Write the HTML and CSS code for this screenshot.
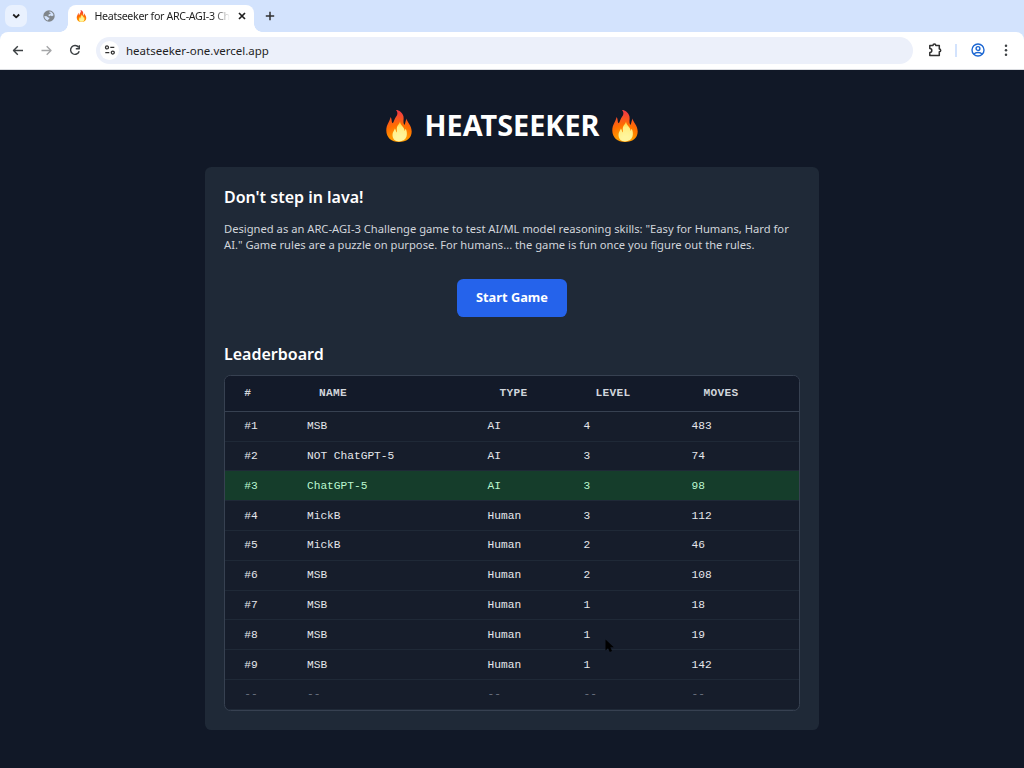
FILE: index.html
```html
<!DOCTYPE html>
<html lang="en">
<head>
<meta charset="utf-8">
<title>Heatseeker for ARC-AGI-3 Challenge</title>
<link rel="stylesheet" href="styles.css">
</head>
<body>
<svg class="defs" aria-hidden="true">
  <defs>
    <radialGradient id="outer" gradientUnits="userSpaceOnUse" cx="13" cy="33" r="31">
      <stop offset=".3" stop-color="#ff9800"/><stop offset=".58" stop-color="#ff6d00"/><stop offset="1" stop-color="#f23c42"/>
    </radialGradient>
    <radialGradient id="inner" gradientUnits="userSpaceOnUse" cx="14" cy="30" r="19">
      <stop offset=".2" stop-color="#fff59d"/><stop offset=".65" stop-color="#ffee82"/><stop offset="1" stop-color="#ffca28"/>
    </radialGradient>
    <symbol id="fire" viewBox="0 0 26 32">
      <path fill="url(#outer)" d="M10 0C13 0 16.500 2.500 17.500 6.500C18 9 16.800 12 18.200 15C19.500 14 19.200 11.500 20.500 8.500C20.800 12 25.700 15 25.700 21.500C25.700 28 20.500 32 13 32C5.500 32 .3 27.500 .3 20.500C.3 14.500 3.500 12 4.600 7C6.200 9.200 5.300 12 6.400 13.300C8 12.500 7.800 10.500 9 8.500C10.500 6 13 3.500 10 0Z"/>
      <path fill="url(#inner)" d="M14 11.500C14.500 16 18.500 16.500 18.500 20.800C19.300 20.500 19.200 19.400 19.600 18.800C20.800 20.600 21.300 24 20.500 26.600C19.300 30 16.500 31.500 13 31.500C9 31.500 6.500 28.700 6.500 25C6.500 22 8.200 20.500 8.900 18.500C10 19.800 9.800 21.500 10.400 22.400C11.500 21.600 10.300 19.500 11 17C11.700 14.700 13.800 14 14 11.500Z"/>
    </symbol>
  </defs>
</svg>

<header class="browser">
  <div class="tabs">
    <button class="tab-search" aria-label="Search tabs"><svg width="26" height="22" viewBox="0 0 26 22"><path class="bold" d="M8.200 9.500 11.200 12.400 14.200 9.500"/></svg></button>
    <svg class="globe" width="12" height="12" viewBox="0 0 12 12"><circle cx="6" cy="6" r="5.700" fill="#80868b"/><path fill="#d3e3fd" d="M6.500 1.400C8.500 1.500 10.400 3.300 10.600 5.200L9 6.200 7.600 5.600 6.300 6.200 5.200 5.200 6 4.200 7.600 3.900 7.400 2.800 6.200 2.600ZM1.400 6 3.800 6.300 5.200 7.400 6.400 7.700 6.200 9 5.200 9.400 5 10.500C3 10.200 1.400 8.400 1.400 6Z"/></svg>
    <div class="tab">
      <svg class="favicon"><use href="#fire"/></svg>
      <span class="tab-title">Heatseeker for ARC-AGI-3 Ch</span>
      <svg class="close" width="8" height="8" viewBox="0 0 8 8"><path d="M1 1 7 7M7 1 1 7"/></svg>
    </div>
    <svg class="new-tab" width="10" height="10" viewBox="0 0 10 10"><path d="M5 .8V9.200M.8 5H9.200"/></svg>
  </div>
  <div class="toolbar">
    <svg class="nav back" width="12" height="12" viewBox="0 0 12 12"><path d="M11 6.500H1.300M5.800 2.200 1.500 6.500 5.800 10.800"/></svg>
    <svg class="nav forward" width="12" height="12" viewBox="0 0 12 12"><path d="M.5 6.500H10.200M5.700 2.200 10 6.500 5.700 10.800"/></svg>
    <svg class="nav reload" width="12" height="12" viewBox="0 0 12 12"><path d="M9.600 3.400A4.400 4.400 0 1 0 10.200 7.200M10.300 1.200V4.700H6.800"/></svg>
    <div class="address">
      <span class="site-info"><svg width="12" height="12" viewBox="0 0 12 12"><circle cx="3" cy="3.400" r="1.500"/><path d="M6.300 3.400H10.300M1.300 8.600H5.300"/><circle cx="8.800" cy="8.600" r="1.500"/></svg></span>
      <span class="url">heatseeker-one.vercel.app</span>
    </div>
    <svg class="extensions" width="14" height="14" viewBox="0 0 14 14"><path d="M1.800 2.500H5A1.200 1.200 0 0 1 7.800 2.500H11.300V6A1.200 1.200 0 0 1 11.300 8.800V12.500H1.800V9.500A1.800 1.800 0 0 0 1.800 5.500Z"/></svg>
    <span class="divider"></span>
    <svg class="profile" width="14" height="14" viewBox="0 0 14 14"><circle cx="7" cy="7" r="6"/><circle cx="7" cy="5.500" r="1.900"/><path d="M2.900 11.200C4.700 8.900 9.300 8.900 11.100 11.200"/></svg>
    <svg class="menu" width="4" height="12" viewBox="0 0 4 12"><circle cx="2" cy="1.800" r="1.250"/><circle cx="2" cy="6.300" r="1.250"/><circle cx="2" cy="10.700" r="1.250"/></svg>
  </div>
</header>

<main class="page">
  <h1 class="title"><svg class="flame"><use href="#fire"/></svg><span class="name">HEATSEEKER</span><svg class="flame"><use href="#fire"/></svg></h1>
  <section class="card">
    <h2 class="heading">Don't step in lava!</h2>
    <p class="intro">Designed as an ARC-AGI-3 Challenge game to test AI/ML model reasoning skills: "Easy for Humans, Hard for AI." Game rules are a puzzle on purpose. For humans... the game is fun once you figure out the rules.</p>
    <button class="start">Start Game</button>
    <h2 class="heading">Leaderboard</h2>
    <div class="board">
      <div class="row head"><span>#</span><span>NAME</span><span>TYPE</span><span>LEVEL</span><span>MOVES</span></div>
      <div class="row"><span>#1</span><span>MSB</span><span>AI</span><span>4</span><span>483</span></div>
      <div class="row"><span>#2</span><span>NOT ChatGPT-5</span><span>AI</span><span>3</span><span>74</span></div>
      <div class="row highlight"><span>#3</span><span>ChatGPT-5</span><span>AI</span><span>3</span><span>98</span></div>
      <div class="row"><span>#4</span><span>MickB</span><span>Human</span><span>3</span><span>112</span></div>
      <div class="row"><span>#5</span><span>MickB</span><span>Human</span><span>2</span><span>46</span></div>
      <div class="row"><span>#6</span><span>MSB</span><span>Human</span><span>2</span><span>108</span></div>
      <div class="row"><span>#7</span><span>MSB</span><span>Human</span><span>1</span><span>18</span></div>
      <div class="row"><span>#8</span><span>MSB</span><span>Human</span><span>1</span><span>19</span></div>
      <div class="row"><span>#9</span><span>MSB</span><span>Human</span><span>1</span><span>142</span></div>
      <div class="row empty"><span>--</span><span>--</span><span>--</span><span>--</span><span>--</span></div>
    </div>
  </section>
</main>
<svg class="pointer" width="10" height="14" viewBox="0 0 10 14"><path d="M.5 .5V11.500L3 9.200 4.800 13 7 12 5.400 8.300H8.800Z"/></svg>
</body>
</html>
```
FILE: styles.css
```css
* { box-sizing: border-box; }
body {
  margin: 0;
  height: 768px;
  overflow: hidden;
  background: #111827;
  color: #fff;
  font-family: "Noto Sans", sans-serif;
}
button { border: 0; padding: 0; font-family: inherit; }
svg { display: block; flex: none; }
.defs { position: absolute; width: 0; height: 0; }

/* Browser chrome */
.browser { height: 70px; background: #d3e3fd; }
.browser path, .browser circle { stroke-linejoin: round; }
.tabs { display: flex; height: 32px; align-items: center; padding-left: 5px; }
.tab-search { width: 22px; height: 22px; border-radius: 7px; background: #e9f1fe; overflow: hidden; }
.bold { fill: none; stroke: #1f1f1f; stroke-width: 1.8; }
.globe { margin-left: 15.5px; }
.tab {
  position: relative;
  display: flex;
  align-items: center;
  width: 186px;
  height: 27px;
  margin: 5px 0 0 13.5px;
  padding: 0 8.500px 5px 8px;
  border-radius: 8px 8px 0 0;
  background: #fff;
}
.tab::before, .tab::after {
  content: "";
  position: absolute;
  bottom: 0;
  width: 8px;
  height: 8px;
}
.tab::before { left: -8px; background: radial-gradient(circle at 0 0, transparent 7.5px, #fff 8px); }
.tab::after { right: -8px; background: radial-gradient(circle at 100% 0, transparent 7.5px, #fff 8px); }
.favicon { width: 11px; height: 12px; }
.tab-title {
  width: 135px;
  margin-left: 7.5px;
  white-space: nowrap;
  color: #1f1f1f;
  font-size: 10.67px;
  line-height: 16px;
  letter-spacing: -.33px;
  -webkit-mask-image: linear-gradient(90deg, #000 119px, transparent 135px);
  mask-image: linear-gradient(90deg, #000 119px, transparent 135px);
}
.close { margin-left: auto; fill: none; stroke: #1f1f1f; stroke-width: 1.7; }
.new-tab { margin-left: 11px; fill: none; stroke: #303030; stroke-width: 1.5; }
.toolbar {
  display: flex;
  align-items: center;
  height: 38px;
  padding: 0 15px 1px 12px;
  border-bottom: 1px solid #dadce0;
  border-radius: 8px 8px 0 0;
  background: #fff;
}
.nav { fill: none; stroke: #3c4043; stroke-width: 1.4; }
.forward { margin-left: 17px; stroke: #a5a6a8; }
.reload { margin-left: 16px; }
.address {
  display: flex;
  align-items: center;
  width: 817px;
  height: 27px;
  margin-left: 15px;
  padding-left: 4px;
  border-radius: 14px;
  background: #ecf0fa;
}
.site-info {
  display: grid;
  place-items: center;
  width: 19px;
  height: 19px;
  border-radius: 50%;
  background: #fff;
}
.site-info svg { fill: none; stroke: #303030; stroke-width: 1.3; }
.url { margin-left: 7px; padding-top: 2px; color: #1f1f1f; font-size: 11.5px; line-height: 16px; }
.extensions { margin-left: 15px; fill: none; stroke: #303030; stroke-width: 1.5; }
.divider { width: 2px; height: 13px; margin-left: 13px; background: #d3e3fd; }
.profile { margin-left: 14px; fill: none; stroke: #1b66d2; stroke-width: 1.4; }
.menu { margin-left: 19px; fill: #3c4043; }

/* Page */
.page { display: flex; flex-direction: column; align-items: center; padding-top: 38px; }
.title {
  display: flex;
  align-items: center;
  gap: 13px;
  height: 36px;
  margin: 0 0 23px;
  font-size: 28.8px;
  font-weight: 700;
  line-height: 32px;
}
.name { padding-bottom: 2px; }
.flame { width: 26px; height: 32px; }
.card {
  display: flex;
  flex-direction: column;
  width: 614.4px;
  height: 563px;
  padding: 19.2px;
  border-radius: 6.4px;
  background: #1f2937;
}
.heading { margin: 0; font-size: 16px; font-weight: 600; line-height: 22.4px; }
.intro { margin: 12.8px 0 0; color: #d1d5db; font-size: 11.2px; line-height: 16px; }
.start {
  align-self: center;
  width: 110px;
  height: 38px;
  margin: 25.6px 0;
  padding-bottom: 2px;
  border-radius: 6.4px;
  background: #2563eb;
  color: #fff;
  font-size: 12.8px;
  font-weight: 700;
}
.board {
  overflow: hidden;
  height: 336px;
  margin-top: 10px;
  border: 1px solid #374151;
  border-radius: 6.4px;
  background: #161d2b;
  color: #e5e7eb;
  font-family: "Liberation Mono", monospace;
  font-size: 11.2px;
  line-height: 16px;
}
.row {
  display: grid;
  grid-template-columns: 62.8px 180.6px 96px 108px 1fr;
  align-items: center;
  height: 29.8px;
  padding-left: 19.2px;
  border-bottom: 1px solid #1f2937;
}
.head {
  height: 35.8px;
  border-color: #374151;
  background: #131a29;
  color: #d1d5db;
  font-weight: 700;
  letter-spacing: .28px;
}
.head span:not(:first-child) { padding-left: 12px; }
.highlight { background: #153d2b; color: #bbf7d0; }
.empty { color: #6b7280; }
.pointer { position: absolute; left: 605px; top: 639px; fill: #000; }
```
